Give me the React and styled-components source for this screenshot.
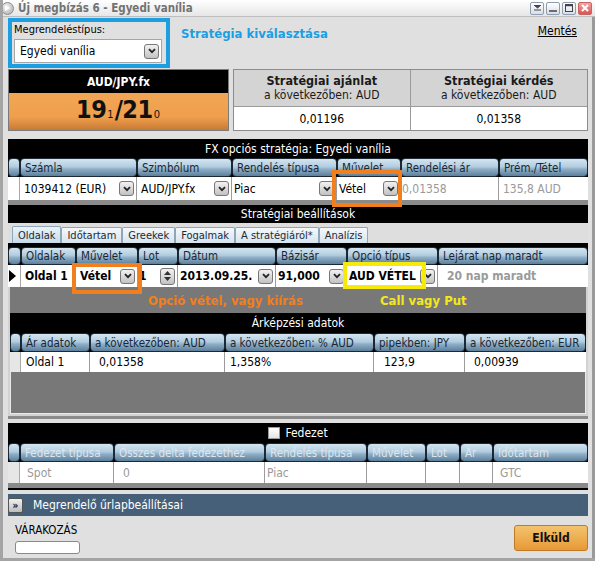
import React from "react";
import styled, { createGlobalStyle } from "styled-components";

const GlobalStyle = createGlobalStyle`
  html, body { margin: 0; padding: 0; background: #e0e0e0; }
  body {
    font-family: "DejaVu Sans Condensed", "DejaVu Sans", sans-serif;
    font-size: 11px;
    color: #000;
  }
`;

const fxCols = "12px 117px 95px 105px 64px 98px 89px";
const stratCols = "13px 55px 62px 40px 98px 71px 91px 150px";
const priceCols = "11px 69px 135px 149px 91px 121px";
const hedgeCols = "12px 94px 151px 102px 59px 34px 33px 95px";

const Window = styled.div`
  width: 595px;
  height: 561px;
  box-sizing: border-box;
  background: #e0e0e0;
  border-left: 3px solid #a4a4a4;
  border-bottom: 3px solid #a4a4a4;
  display: flex;
  flex-direction: column;
  overflow: hidden;
`;

const TitleBar = styled.div`
  height: 17px;
  box-sizing: border-box;
  display: flex;
  align-items: center;
  padding: 0 3px 0 1px;
  margin-left: -3px;
  background: linear-gradient(#ffffff, #e6e6e6);
  border-bottom: 1px solid #bdbdbd;
`;

const AppIcon = styled.span`
  width: 13px;
  height: 13px;
  border-radius: 50%;
  background: radial-gradient(circle at 40% 35%, #f4f4f4, #a8a8a8);
  border: 1px solid #8c8c8c;
  box-sizing: border-box;
  display: flex;
  align-items: center;
  justify-content: center;
`;

const TitleText = styled.span`
  flex: 1;
  margin-left: 4px;
  font-weight: bold;
  font-size: 11.5px;
  color: #727272;
`;

const WinButton = styled.span`
  width: 14px;
  height: 13px;
  margin-left: 2px;
  box-sizing: border-box;
  border: 1px solid ${(p) => (p.$close ? "#c86464" : "#8e9db2")};
  border-radius: 2px;
  background: ${(p) =>
    p.$close
      ? "linear-gradient(#f4a4a4, #d9534f)"
      : "linear-gradient(#ffffff, #d8dee8)"};
  display: flex;
  align-items: center;
  justify-content: center;
`;

const Body = styled.div`
  flex: 1;
  display: flex;
  flex-direction: column;
  padding: 0 4px 0 5px;
  border-right: 3px solid #9a9a9a;
  width: 580px;
`;

const TopRow = styled.div`
  display: flex;
  align-items: flex-start;
  margin-top: 1px;
  height: 50px;
`;

const OrderTypeBox = styled.div`
  width: 162px;
  height: 50px;
  box-sizing: border-box;
  border: 4px solid #1b9fe0;
  padding: 1px 4px 0 2px;
`;

const FieldLabel = styled.div`
  font-size: 11px;
  line-height: 13px;
`;

const SelectBox = styled.div`
  margin-top: 3px;
  height: 24px;
  box-sizing: border-box;
  background: #fff;
  border: 1px solid #a6a6a6;
  display: flex;
  align-items: center;
  justify-content: space-between;
  padding: 0 2px 0 5px;
  font-size: 12px;
`;

const StrategyHeading = styled.div`
  margin: 8px 0 0 11px;
  font-weight: bold;
  font-size: 13px;
  color: #1b9fe3;
`;

const SaveLink = styled.a`
  margin: 6px 11px 0 auto;
  font-size: 12px;
  color: #000;
  text-decoration: underline;
`;

const QuoteRow = styled.div`
  display: flex;
  gap: 4px;
  margin-top: 1px;
  height: 62px;
`;

const SymbolCard = styled.div`
  width: 221px;
  box-sizing: border-box;
  border: 1px solid #7b7b7b;
  display: flex;
  flex-direction: column;
`;

const SymbolHead = styled.div`
  height: 23px;
  background: #000;
  color: #fff;
  font-weight: bold;
  font-size: 12px;
  display: flex;
  align-items: center;
  justify-content: center;
`;

const PriceBody = styled.div`
  flex: 1;
  background: linear-gradient(#f2a653, #ef9f4d 65%, #c77a34);
  display: flex;
  align-items: center;
  justify-content: center;
  font-weight: bold;
  color: #111;
  padding-top: 2px;
`;

const PriceText = styled.span`
  white-space: nowrap;
  line-height: 28px;
`;

const BigDigits = styled.span`
  font-size: 25px;
  letter-spacing: -0.5px;
`;

const SmallDigit = styled.span`
  font-size: 11px;
  font-weight: normal;
  margin: 0 1px;
`;

const QuoteTable = styled.div`
  flex: 1;
  box-sizing: border-box;
  border: 1px solid #8c8c8c;
  display: grid;
  grid-template-columns: 1fr 1fr;
  grid-template-rows: 37px 1fr;
  background: #fff;
`;

const QuoteHead = styled.div`
  background: #d4d4d4;
  border-bottom: 1px solid #9a9a9a;
  border-right: ${(p) => (p.$last ? "none" : "1px solid #9a9a9a")};
  display: flex;
  flex-direction: column;
  align-items: center;
  justify-content: center;
  font-size: 12px;
  line-height: 14px;
  color: #1a1a1a;
  b { font-size: 12.5px; }
`;

const QuoteValue = styled.div`
  border-right: ${(p) => (p.$last ? "none" : "1px solid #9a9a9a")};
  display: flex;
  align-items: center;
  justify-content: center;
  font-size: 12px;
`;

const Panel = styled.div`
  background: #000;
  margin-top: ${(p) => p.$top || 0}px;
  display: flex;
  flex-direction: column;
`;

const PanelTitle = styled.div`
  height: ${(p) => p.$h || 19}px;
  color: #fff;
  font-size: 12px;
  display: flex;
  align-items: center;
  justify-content: center;
  gap: 5px;
`;

const HeadRow = styled.div`
  display: grid;
  grid-template-columns: ${(p) => p.$cols};
  height: ${(p) => p.$h || 19}px;
  margin-top: ${(p) => p.$top || 0}px;
`;

const HeadCell = styled.div`
  box-sizing: border-box;
  border: 1px solid #1c2834;
  border-radius: 4px;
  background: linear-gradient(#d3e5f1 0%, #b2cde0 45%, #8eaec6 60%, #5d7f9b 100%);
  color: ${(p) => (p.$dim ? "#dde6ee" : "#1a2733")};
  font-size: 11.5px;
  padding-left: 4px;
  display: flex;
  align-items: center;
  white-space: nowrap;
  overflow: hidden;
`;

const DataRow = styled.div`
  display: grid;
  grid-template-columns: ${(p) => p.$cols};
  height: ${(p) => p.$h || 22}px;
  background: #fff;
`;

const Indicator = styled.div`
  background: ${(p) => (p.$white ? "#fff" : "#e6e6e6")};
  border-right: 1px solid #a8a8a8;
  display: flex;
  align-items: center;
  padding-left: 1px;
`;

const Cell = styled.div`
  position: relative;
  display: flex;
  align-items: center;
  justify-content: space-between;
  gap: 2px;
  padding: 0 2px 0 ${(p) => p.$pad ?? 4}px;
  border-right: ${(p) => (p.$last ? "none" : "1px solid #9c9c9c")};
  font-size: 12px;
  font-weight: ${(p) => (p.$bold ? "bold" : "normal")};
  color: ${(p) => (p.$muted ? "#9a9a9a" : "#000")};
  white-space: nowrap;
`;

const Strip = styled.div`
  height: ${(p) => p.$h || 5}px;
  background: #8a8a8a;
  border-bottom: ${(p) => p.$bottom || 0}px solid #000;
`;

const DropButton = styled.span`
  flex: none;
  width: 15px;
  height: 15px;
  box-sizing: border-box;
  border: 1px solid #777;
  border-radius: 3px;
  background: linear-gradient(#f2f2f2, #c2c2c2);
  display: flex;
  align-items: center;
  justify-content: center;
`;

const SpinButton = styled.span`
  flex: none;
  width: 15px;
  height: 17px;
  box-sizing: border-box;
  border: 1px solid #777;
  border-radius: 3px;
  background: linear-gradient(#f2f2f2, #c2c2c2);
  display: flex;
  flex-direction: column;
  align-items: center;
  justify-content: center;
  gap: 2px;
`;

const Highlight = styled.span`
  position: absolute;
  top: ${(p) => p.$t}px;
  bottom: ${(p) => p.$b}px;
  left: ${(p) => p.$l}px;
  right: ${(p) => p.$r}px;
  border: 4px solid ${(p) => p.$color};
  pointer-events: none;
  z-index: 2;
`;

const TabStrip = styled.div`
  height: 20px;
  background: #dedede;
  display: flex;
  align-items: flex-end;
  padding-left: 4px;
`;

const Tab = styled.div`
  height: ${(p) => (p.$active ? 17 : 16)}px;
  box-sizing: border-box;
  border: 1px solid #8ea6b8;
  border-bottom: none;
  border-radius: 2px 2px 0 0;
  background: ${(p) =>
    p.$active
      ? "linear-gradient(#eaf3f9, #c6dbea)"
      : "linear-gradient(#f4f8fb, #d6e4ee)"};
  padding: 0 5px;
  font-size: 11px;
  color: #1c2a36;
  display: flex;
  align-items: center;
`;

const LowerArea = styled.div`
  background: #787878;
  border: 2px solid #d2d2d2;
  border-top: none;
  display: flex;
  flex-direction: column;
`;

const Notes = styled.div`
  height: 26px;
  display: flex;
  align-items: center;
  padding-left: 138px;
  font-weight: bold;
  font-size: 13px;
`;

const Note = styled.span`
  color: ${(p) => p.$color};
  flex: ${(p) => (p.$w ? `0 0 ${p.$w}px` : "none")};
`;

const PriceFill = styled.div`
  height: 41px;
  background: #787878;
  border: 1px solid #e8e8e8;
  border-top: none;
`;

const CheckBox = styled.span`
  width: 12px;
  height: 12px;
  box-sizing: border-box;
  background: linear-gradient(#ffffff, #e4e4e4);
  border: 1px solid #9a9a9a;
`;

const SettingsBar = styled.div`
  margin-top: 4px;
  height: 22px;
  background: #47607a;
  color: #fff;
  font-size: 12px;
  display: flex;
  align-items: center;
`;

const ExpandButton = styled.span`
  width: 15px;
  height: 15px;
  box-sizing: border-box;
  border: 1px solid #555;
  border-radius: 2px;
  background: linear-gradient(#f0f0f0, #bdbdbd);
  color: #111;
  font-size: 10px;
  font-weight: bold;
  display: flex;
  align-items: center;
  justify-content: center;
  margin-right: 10px;
`;

const Footer = styled.div`
  flex: 1;
  display: flex;
  justify-content: space-between;
  padding: 7px 0 0 7px;
`;

const StatusBlock = styled.div`
  display: flex;
  flex-direction: column;
  gap: 4px;
  font-size: 11.5px;
`;

const StatusField = styled.div`
  width: 65px;
  height: 13px;
  box-sizing: border-box;
  background: #fff;
  border: 1px solid #8a8a8a;
  border-radius: 3px;
`;

const SendButton = styled.button`
  width: 74px;
  height: 26px;
  margin-top: 2px;
  box-sizing: border-box;
  border: 1px solid #c07a26;
  border-radius: 3px;
  background: linear-gradient(#f3c36e, #e79a36);
  font-family: inherit;
  font-weight: bold;
  font-size: 12px;
  color: #111;
`;

const Chevron = () => (
  <svg width="8" height="6" viewBox="0 0 8 6">
    <path d="M1 1.2 L4 4.2 L7 1.2" fill="none" stroke="#222" strokeWidth="1.8" />
  </svg>
);

const Drop = () => (
  <DropButton>
    <Chevron />
  </DropButton>
);

const Spin = () => (
  <SpinButton>
    <svg width="7" height="4" viewBox="0 0 7 4">
      <path d="M0 4 L3.5 0 L7 4Z" fill="#333" />
    </svg>
    <svg width="7" height="4" viewBox="0 0 7 4">
      <path d="M0 0 L3.5 4 L7 0Z" fill="#333" />
    </svg>
  </SpinButton>
);

const RowArrow = () => (
  <svg width="7" height="12" viewBox="0 0 7 12">
    <path d="M0 0 L7 6 L0 12Z" fill="#000" />
  </svg>
);

const fxHeads = ["", "Számla", "Szimbólum", "Rendelés típusa", "Művelet", "Rendelési ár", "Prém./Tétel"];
const stratHeads = ["", "Oldalak", "Művelet", "Lot", "Dátum", "Bázisár", "Opció típus", "Lejárat nap maradt"];
const priceHeads = ["", "Ár adatok", "a következőben: AUD", "a következőben: % AUD", "pipekben: JPY", "a következőben: EUR"];
const hedgeHeads = ["", "Fedezet típusa", "Összes delta fedezethez", "Rendelés típusa", "Művelet", "Lot", "Ár", "Időtartam"];
const tabs = ["Oldalak", "Időtartam", "Greekek", "Fogalmak", "A stratégiáról*", "Analízis"];

export default function App() {
  return (
    <>
      <GlobalStyle />
      <Window>
        <TitleBar>
          <AppIcon>
            <svg width="5" height="6" viewBox="0 0 5 6">
              <path d="M0 0 L5 3 L0 6Z" fill="#fff" />
            </svg>
          </AppIcon>
          <TitleText>Új megbízás 6 - Egyedi vanília</TitleText>
          <WinButton>
            <svg width="7" height="6" viewBox="0 0 7 6">
              <path d="M0 0 L7 0 L3.5 3Z M0 5 H7" fill="#444" stroke="#444" strokeWidth="1" />
            </svg>
          </WinButton>
          <WinButton>
            <svg width="8" height="8" viewBox="0 0 8 8">
              <path d="M0 7 H8" stroke="#444" strokeWidth="1.5" />
            </svg>
          </WinButton>
          <WinButton>
            <svg width="8" height="8" viewBox="0 0 8 8">
              <rect x="0.5" y="0.5" width="7" height="7" fill="none" stroke="#444" strokeWidth="1" />
              <path d="M0 1.5 H8" stroke="#444" strokeWidth="1.5" />
            </svg>
          </WinButton>
          <WinButton $close>
            <svg width="8" height="8" viewBox="0 0 8 8">
              <path d="M1 1 L7 7 M7 1 L1 7" stroke="#fff" strokeWidth="2" />
            </svg>
          </WinButton>
        </TitleBar>

        <Body>
          <TopRow>
            <OrderTypeBox>
              <FieldLabel>Megrendeléstípus:</FieldLabel>
              <SelectBox>
                Egyedi vanília
                <Drop />
              </SelectBox>
            </OrderTypeBox>
            <StrategyHeading>Stratégia kiválasztása</StrategyHeading>
            <SaveLink>Mentés</SaveLink>
          </TopRow>

          <QuoteRow>
            <SymbolCard>
              <SymbolHead>AUD/JPY.fx</SymbolHead>
              <PriceBody>
                <PriceText>
                  <BigDigits>19</BigDigits>
                  <SmallDigit>1</SmallDigit>
                  <BigDigits>/21</BigDigits>
                  <SmallDigit>0</SmallDigit>
                </PriceText>
              </PriceBody>
            </SymbolCard>
            <QuoteTable>
              <QuoteHead>
                <b>Stratégiai ajánlat</b>
                a következőben: AUD
              </QuoteHead>
              <QuoteHead $last>
                <b>Stratégiai kérdés</b>
                a következőben: AUD
              </QuoteHead>
              <QuoteValue>0,01196</QuoteValue>
              <QuoteValue $last>0,01358</QuoteValue>
            </QuoteTable>
          </QuoteRow>

          <Panel $top={8}>
            <PanelTitle>FX opciós stratégia: Egyedi vanília</PanelTitle>
            <HeadRow $cols={fxCols}>
              {fxHeads.map((h, i) => (
                <HeadCell key={i}>{h}</HeadCell>
              ))}
            </HeadRow>
            <DataRow $cols={fxCols} $h={23}>
              <Indicator $white />
              <Cell>1039412 (EUR)<Drop /></Cell>
              <Cell>AUD/JPY.fx<Drop /></Cell>
              <Cell $pad={2}>Piac<Drop /></Cell>
              <Cell $pad={2}>
                Vétel
                <Drop />
                <Highlight $color="#f27f1e" $t={-7} $b={-7} $l={-5} $r={-2} />
              </Cell>
              <Cell $pad={1} $muted>0,01358</Cell>
              <Cell $muted $last>135,8 AUD</Cell>
            </DataRow>
            <Strip />
          </Panel>

          <Panel>
            <PanelTitle $h={18}>Stratégiai beállítások</PanelTitle>
            <TabStrip>
              {tabs.map((t, i) => (
                <Tab key={t} $active={i === 0}>{t}</Tab>
              ))}
            </TabStrip>
            <HeadRow $cols={stratCols} $h={18} $top={4}>
              {stratHeads.map((h, i) => (
                <HeadCell key={i}>{h}</HeadCell>
              ))}
            </HeadRow>
            <DataRow $cols={stratCols}>
              <Indicator $white>
                <RowArrow />
              </Indicator>
              <Cell $bold>Oldal 1</Cell>
              <Cell $bold>
                Vétel
                <Drop />
                <Highlight $color="#f27f1e" $t={-2} $b={-7} $l={-4} $r={-5} />
              </Cell>
              <Cell $bold $pad={1}>1<Spin /></Cell>
              <Cell $bold $pad={2}>2013.09.25.<Drop /></Cell>
              <Cell $bold $pad={2}>91,000<Drop /></Cell>
              <Cell $bold $pad={2}>
                AUD VÉTEL
                <Drop />
                <Highlight $color="#f6ea0c" $t={-3} $b={-2} $l={-4} $r={11} />
              </Cell>
              <Cell $bold $muted $last $pad={9}>20 nap maradt</Cell>
            </DataRow>
            <LowerArea>
              <Notes>
                <Note $color="#f27f1e" $w={232}>Opció vétel, vagy kiírás</Note>
                <Note $color="#f3e81c">Call vagy Put</Note>
              </Notes>
              <Panel>
                <PanelTitle $h={20}>Árképzési adatok</PanelTitle>
                <HeadRow $cols={priceCols}>
                  {priceHeads.map((h, i) => (
                    <HeadCell key={i}>{h}</HeadCell>
                  ))}
                </HeadRow>
                <DataRow $cols={priceCols} $h={20}>
                  <Indicator />
                  <Cell $pad={5}>Oldal 1</Cell>
                  <Cell $pad={9}>0,01358</Cell>
                  <Cell $pad={5}>1,358%</Cell>
                  <Cell $pad={10}>123,9</Cell>
                  <Cell $pad={9} $last>0,00939</Cell>
                </DataRow>
                <PriceFill />
              </Panel>
            </LowerArea>
            <Strip $h={3} />
          </Panel>

          <Panel $top={4}>
            <PanelTitle $h={20}>
              <CheckBox />
              Fedezet
            </PanelTitle>
            <HeadRow $cols={hedgeCols}>
              {hedgeHeads.map((h, i) => (
                <HeadCell key={i} $dim>{h}</HeadCell>
              ))}
            </HeadRow>
            <DataRow $cols={hedgeCols} $h={21}>
              <Indicator />
              <Cell $muted $pad={7}>Spot</Cell>
              <Cell $muted $pad={9}>0</Cell>
              <Cell $muted $pad={2}>Piac</Cell>
              <Cell />
              <Cell />
              <Cell />
              <Cell $muted $pad={7} $last>GTC</Cell>
            </DataRow>
            <Strip $bottom={2} />
          </Panel>

          <SettingsBar>
            <ExpandButton>»</ExpandButton>
            Megrendelő űrlapbeállításai
          </SettingsBar>

          <Footer>
            <StatusBlock>
              VÁRAKOZÁS
              <StatusField />
            </StatusBlock>
            <SendButton>Elküld</SendButton>
          </Footer>
        </Body>
      </Window>
    </>
  );
}
